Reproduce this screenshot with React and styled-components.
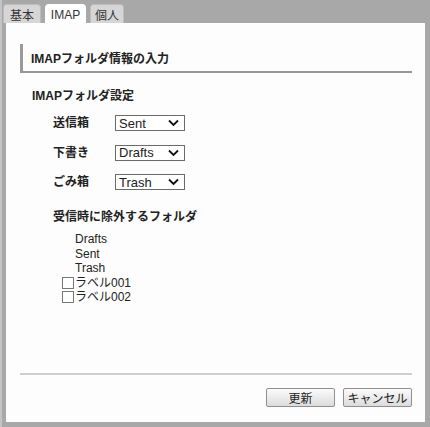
import { Fragment } from "react";
import styled, { createGlobalStyle } from "styled-components";

const GlobalStyle = createGlobalStyle`
  html, body {
    margin: 0;
    padding: 0;
    background: #ffffff;
  }
  body {
    font-family: "Liberation Sans", "Noto Sans CJK JP", sans-serif;
    font-size: 12px;
    color: #222;
  }
`;

const Frame = styled.div`
  width: 430px;
  height: 427px;
  box-sizing: border-box;
  background: #a8a8a8;
  border-left: 2px solid #c4c4c4;
  display: flex;
  flex-direction: column;
`;

const TabBar = styled.div`
  height: 23px;
  display: flex;
  align-items: flex-end;
  gap: 4px;
  padding-left: 1px;
`;

const Tab = styled.div`
  height: 19px;
  width: ${(p) => p.width}px;
  box-sizing: border-box;
  display: flex;
  align-items: center;
  justify-content: center;
  border: 1px solid ${(p) => (p.active ? "#ffffff" : "#bdbdbd")};
  border-bottom: none;
  border-radius: 4px 4px 0 0;
  background: ${(p) => (p.active ? "#ffffff" : "#d6d6d6")};
  color: #333;
  font-size: 12px;
  padding-top: 1px;
`;

const Panel = styled.div`
  flex: 1;
  margin: 0 5px 5px 4px;
  background: #fdfdfd;
  display: flex;
  flex-direction: column;
  padding: 21px 13px 15px 14px;
`;

const Header = styled.div`
  height: 27px;
  border-left: 3px solid #9a9a9a;
  border-bottom: 2px solid #999;
  display: flex;
  align-items: center;
  padding-left: 8px;
  font-weight: bold;
  font-size: 12px;
`;

const SectionTitle = styled.div`
  margin: ${(p) => p.top}px 0 0 ${(p) => p.left}px;
  font-weight: bold;
  line-height: 15px;
`;

const FieldGrid = styled.div`
  display: grid;
  grid-template-columns: 62px 70px;
  row-gap: 13.5px;
  margin: 11px 0 0 33px;
  align-items: center;
`;

const FieldLabel = styled.div`
  font-weight: bold;
  line-height: 16px;
`;

const SelectBox = styled.div`
  height: 16px;
  box-sizing: border-box;
  border: 1px solid #6b6b6b;
  background: #fff;
  display: flex;
  align-items: center;
  justify-content: space-between;
  padding: 0 5px 0 3px;
  font-size: 13px;
  color: #222;
`;

const FolderList = styled.div`
  margin: 7px 0 0 42px;
  display: flex;
  flex-direction: column;
  line-height: 14.5px;
`;

const FolderItem = styled.div`
  padding-left: ${(p) => (p.check ? 0 : 13)}px;
  display: flex;
  align-items: center;
  gap: 1px;
  color: #222;
`;

const CheckSquare = styled.span`
  width: 10px;
  height: 10px;
  border: 1px solid #777;
  background: #fff;
  display: inline-block;
`;

const Footer = styled.div`
  margin-top: auto;
  border-top: 2px solid #cfcfcf;
  padding-top: 13px;
  display: flex;
  justify-content: flex-end;
  gap: 8px;
`;

const Button = styled.button`
  width: 69px;
  height: 19px;
  border: 1px solid #8f8f8f;
  border-radius: 2px;
  background: linear-gradient(#fbfbfb, #dcdcdc);
  font-family: "Liberation Sans", "Noto Sans CJK JP", sans-serif;
  font-size: 12px;
  color: #222;
  padding: 0;
`;

const Chevron = () => (
  <svg width="11" height="8" viewBox="0 0 11 8">
    <path d="M1 1.5 L5.5 6 L10 1.5" fill="none" stroke="#111" strokeWidth="1.8" />
  </svg>
);

const folders = [
  { label: "送信箱", value: "Sent" },
  { label: "下書き", value: "Drafts" },
  { label: "ごみ箱", value: "Trash" },
];

export default function App() {
  return (
    <>
      <GlobalStyle />
      <Frame>
        <TabBar>
          <Tab width={38}>基本</Tab>
          <Tab width={41} active>
            IMAP
          </Tab>
          <Tab width={34}>個人</Tab>
        </TabBar>
        <Panel>
          <Header>IMAPフォルダ情報の入力</Header>
          <SectionTitle top={16} left={12}>
            IMAPフォルダ設定
          </SectionTitle>
          <FieldGrid>
            {folders.map((f) => (
              <Fragment key={f.value}>
                <FieldLabel>{f.label}</FieldLabel>
                <SelectBox>
                  <span>{f.value}</span>
                  <Chevron />
                </SelectBox>
              </Fragment>
            ))}
          </FieldGrid>
          <SectionTitle top={20} left={33}>
            受信時に除外するフォルダ
          </SectionTitle>
          <FolderList>
            <FolderItem>Drafts</FolderItem>
            <FolderItem>Sent</FolderItem>
            <FolderItem>Trash</FolderItem>
            <FolderItem check>
              <CheckSquare />
              ラベル001
            </FolderItem>
            <FolderItem check>
              <CheckSquare />
              ラベル002
            </FolderItem>
          </FolderList>
          <Footer>
            <Button>更新</Button>
            <Button>キャンセル</Button>
          </Footer>
        </Panel>
      </Frame>
    </>
  );
}
